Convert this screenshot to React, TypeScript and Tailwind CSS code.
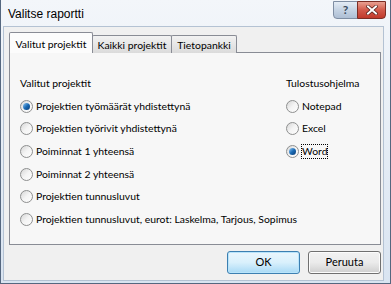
import React from "react";

function Radio({ checked }: { checked?: boolean }) {
  return (
    <span className="relative inline-flex w-[13px] h-[13px] shrink-0 rounded-full border border-[#8e8f8f] bg-gradient-to-br from-[#d6d6d6] via-[#f4f4f4] to-[#fdfdfd] items-center justify-center">
      {checked && (
        <span className="w-[7px] h-[7px] rounded-full bg-gradient-to-br from-[#8ecbf5] via-[#1a6bb5] to-[#0d3c74]" />
      )}
    </span>
  );
}

function Option({ label, checked, focus }: { label: string; checked?: boolean; focus?: boolean }) {
  return (
    <div className="flex items-center h-[22.6px] whitespace-nowrap">
      <Radio checked={checked} />
      <span className={"ml-[3px] leading-[13px] " + (focus ? "outline outline-1 outline-dotted outline-black" : "")}>
        {label}
      </span>
    </div>
  );
}

export default function App() {
  const projects = [
    "Projektien työmäärät yhdistettynä",
    "Projektien työrivit yhdistettynä",
    "Poiminnat 1 yhteensä",
    "Poiminnat 2 yhteensä",
    "Projektien tunnusluvut",
    "Projektien tunnusluvut, eurot: Laskelma, Tarjous, Sopimus",
  ];

  return (
    <div className="w-[391px] h-[284px] flex flex-col overflow-hidden bg-gradient-to-b from-[#f3f6fa] to-[#d9e4f1] border-l border-r border-b border-[#55677f] text-[10.4px] text-black font-['Lato',sans-serif]">
      {/* title bar */}
      <div className="h-[26px] flex items-start shrink-0">
        <span className="ml-[7px] mt-[5px] text-[12px] text-black font-['Liberation_Sans',sans-serif]">Valitse raportti</span>
        <div className="ml-auto mr-[4px] mt-[1px] flex">
          <div className="w-[25px] h-[18px] flex items-center justify-center rounded-bl-[4px] border border-[#7f8ea3] bg-gradient-to-b from-[#e4ecf5] via-[#c5d3e3] to-[#aebfd4] text-[12px] font-bold text-[#3b4b60]">
            ?
          </div>
          <div className="w-[29px] h-[18px] -ml-px flex items-center justify-center rounded-br-[4px] border border-[#7b2d24] bg-gradient-to-b from-[#e7a091] via-[#d2594a] to-[#c0392b]">
            <svg width="12" height="10" viewBox="0 0 12 10">
              <path d="M2 1.5 L10 8.5 M10 1.5 L2 8.5" stroke="#4a1a14" strokeWidth="3.4" strokeLinecap="square" />
              <path d="M2 1.5 L10 8.5 M10 1.5 L2 8.5" stroke="#ffffff" strokeWidth="2" strokeLinecap="square" />
            </svg>
          </div>
        </div>
      </div>

      {/* client area */}
      <div className="flex-1 ml-[2px] mr-[6px] mb-[2px] bg-[#f0f0f0] border border-[#b4c2d3] flex flex-col">
        {/* tabs */}
        <div className="flex items-end ml-[5px] mt-[5px] h-[21px] relative z-10 whitespace-nowrap">
          <div className="h-[21px] w-[84px] flex justify-center pt-[4px] bg-[#fcfcfc] border border-b-0 border-[#898c95] rounded-t-[2px]">
            Valitut projektit
          </div>
          <div className="h-[18px] w-[80px] flex justify-center pt-[2px] -ml-px border border-b-0 border-[#898c95] bg-gradient-to-b from-[#f2f2f2] to-[#dbdbdb] rounded-t-[2px]">
            Kaikki projektit
          </div>
          <div className="h-[18px] w-[66px] flex justify-center pt-[2px] -ml-px border border-b-0 border-[#898c95] bg-gradient-to-b from-[#f2f2f2] to-[#dbdbdb] rounded-t-[2px]">
            Tietopankki
          </div>
        </div>
        <div className="ml-[5px] mr-[2px] -mt-px h-[193px] border border-[#898c95] bg-[#f7f7f7] flex pl-[10px] pt-[20px]">
          <div className="flex flex-col w-[266px]">
            <div className="h-[22px] flex items-center">Valitut projektit</div>
            {projects.map((p, i) => (
              <Option key={p} label={p} checked={i === 0} />
            ))}
          </div>
          <div className="flex flex-col">
            <div className="h-[22px] flex items-center">Tulostusohjelma</div>
            <Option label="Notepad" />
            <Option label="Excel" />
            <Option label="Word" checked focus />
          </div>
        </div>
        {/* buttons */}
        <div className="flex justify-end gap-[8px] mt-[6px] mr-[2px]">
          <button className="w-[73px] h-[23px] rounded-[3px] border border-[#3c7fb1] bg-gradient-to-b from-[#eaf6fd] via-[#d9f0fc] to-[#a7d9f5] shadow-[inset_0_0_0_1px_#b8e4fb] text-[11px]">
            OK
          </button>
          <button className="w-[73px] h-[23px] rounded-[3px] border border-[#707070] bg-gradient-to-b from-[#f2f2f2] via-[#ebebeb] to-[#cfcfcf] shadow-[inset_0_0_0_1px_#fcfcfc] text-[11px]">
            Peruuta
          </button>
        </div>
      </div>
    </div>
  );
}
